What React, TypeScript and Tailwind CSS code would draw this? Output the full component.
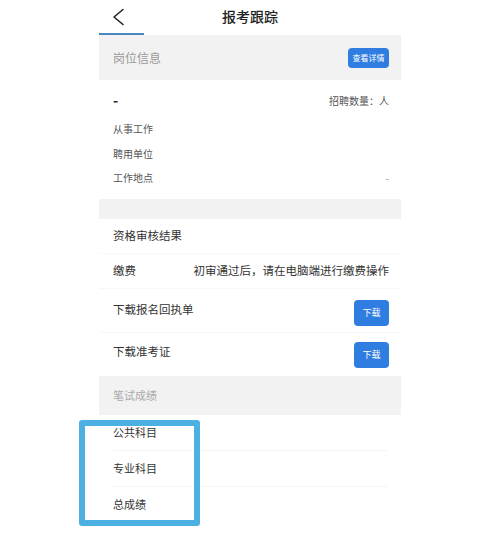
import { type ReactNode } from 'react'

// 报考跟踪 — 报名进度页（移动端）

const font = { fontFamily: '"Noto Sans CJK SC", "Noto Sans", sans-serif' }

function SectionBar({ children, className = '' }: { children?: ReactNode; className?: string }) {
  return (
    <div className={`flex items-center justify-between bg-[#f2f2f2] pl-[14px] pr-[12px] ${className}`}>
      {children}
    </div>
  )
}

function BlueButton({ children, className = '' }: { children: ReactNode; className?: string }) {
  return (
    <button
      type="button"
      className={`flex items-center justify-center rounded-[4px] bg-[#2f7de1] text-white ${className}`}
    >
      {children}
    </button>
  )
}

export default function App() {
  return (
    <div className="relative h-[533px] w-[500px] overflow-hidden bg-white" style={font}>
      <div className="mx-auto w-[302px]">
        {/* 顶部导航 */}
        <div className="relative flex h-[33px] items-center">
          <svg
            className="ml-[12px] h-[18px] w-[14px] text-[#222]"
            viewBox="0 0 14 18"
            fill="none"
            stroke="currentColor"
            strokeWidth="1.6"
            strokeLinecap="round"
            strokeLinejoin="round"
          >
            <path d="M12 1.5L3 9l9 7.5" />
          </svg>
          <div className="absolute inset-x-0 text-center text-[14px] font-medium text-[#222]">报考跟踪</div>
        </div>
        <div className="h-[2px] w-[45px] bg-[#4a88bf]" />

        {/* 岗位信息 */}
        <SectionBar className="h-[45px]">
          <span className="text-[12px] text-[#999]">岗位信息</span>
          <BlueButton className="h-[20px] w-[41px] text-[8px]">查看详情</BlueButton>
        </SectionBar>

        <div className="pl-[14px] pr-[12px] pt-[12px] text-[10px] text-[#555]">
          <div className="flex h-[16px] items-center justify-between">
            <span className="text-[14px] font-bold leading-none text-[#222]">-</span>
            <span>招聘数量：人</span>
          </div>
          <div className="flex h-[28px] items-end">从事工作</div>
          <div className="flex h-[25px] items-end">聘用单位</div>
          <div className="flex h-[24px] items-end justify-between">
            <span>工作地点</span>
            <span className="text-[#999]">-</span>
          </div>
          <div className="h-[14px]" />
        </div>

        <SectionBar className="h-[20px]" />

        {/* 报名进度 */}
        <div className="text-[11.5px] text-[#333]">
          <div className="flex h-[35px] items-center border-b border-[#f7f7f7] pl-[14px]">资格审核结果</div>
          <div className="flex h-[35px] items-center justify-between border-b border-[#f7f7f7] pl-[14px] pr-[12px]">
            <span>缴费</span>
            <span>初审通过后，请在电脑端进行缴费操作</span>
          </div>
          <div className="flex h-[44px] items-start justify-between border-b border-[#f7f7f7] pl-[14px] pr-[12px] pt-[11px]">
            <span className="mt-[1px]">下载报名回执单</span>
            <BlueButton className="h-[26px] w-[35px] text-[9px]">下载</BlueButton>
          </div>
          <div className="flex h-[43px] items-start justify-between pl-[14px] pr-[12px] pt-[9px]">
            <span className="mt-[1px]">下载准考证</span>
            <BlueButton className="h-[26px] w-[35px] text-[9px]">下载</BlueButton>
          </div>
        </div>

        {/* 笔试成绩 */}
        <SectionBar className="h-[39px]">
          <span className="text-[11px] text-[#aaa]">笔试成绩</span>
        </SectionBar>

        <div className="text-[11px] text-[#333]">
          <div className="mx-[14px] flex h-[36px] items-center border-b border-[#f5f5f5]">公共科目</div>
          <div className="mx-[14px] flex h-[36px] items-center border-b border-[#f5f5f5]">专业科目</div>
          <div className="mx-[14px] flex h-[35px] items-center">总成绩</div>
        </div>
      </div>

      {/* 标注框 */}
      <div className="pointer-events-none absolute left-[79px] top-[420px] h-[106px] w-[121px] rounded-[3px] border-[6px] border-[#4cb0e2]" />
    </div>
  )
}
